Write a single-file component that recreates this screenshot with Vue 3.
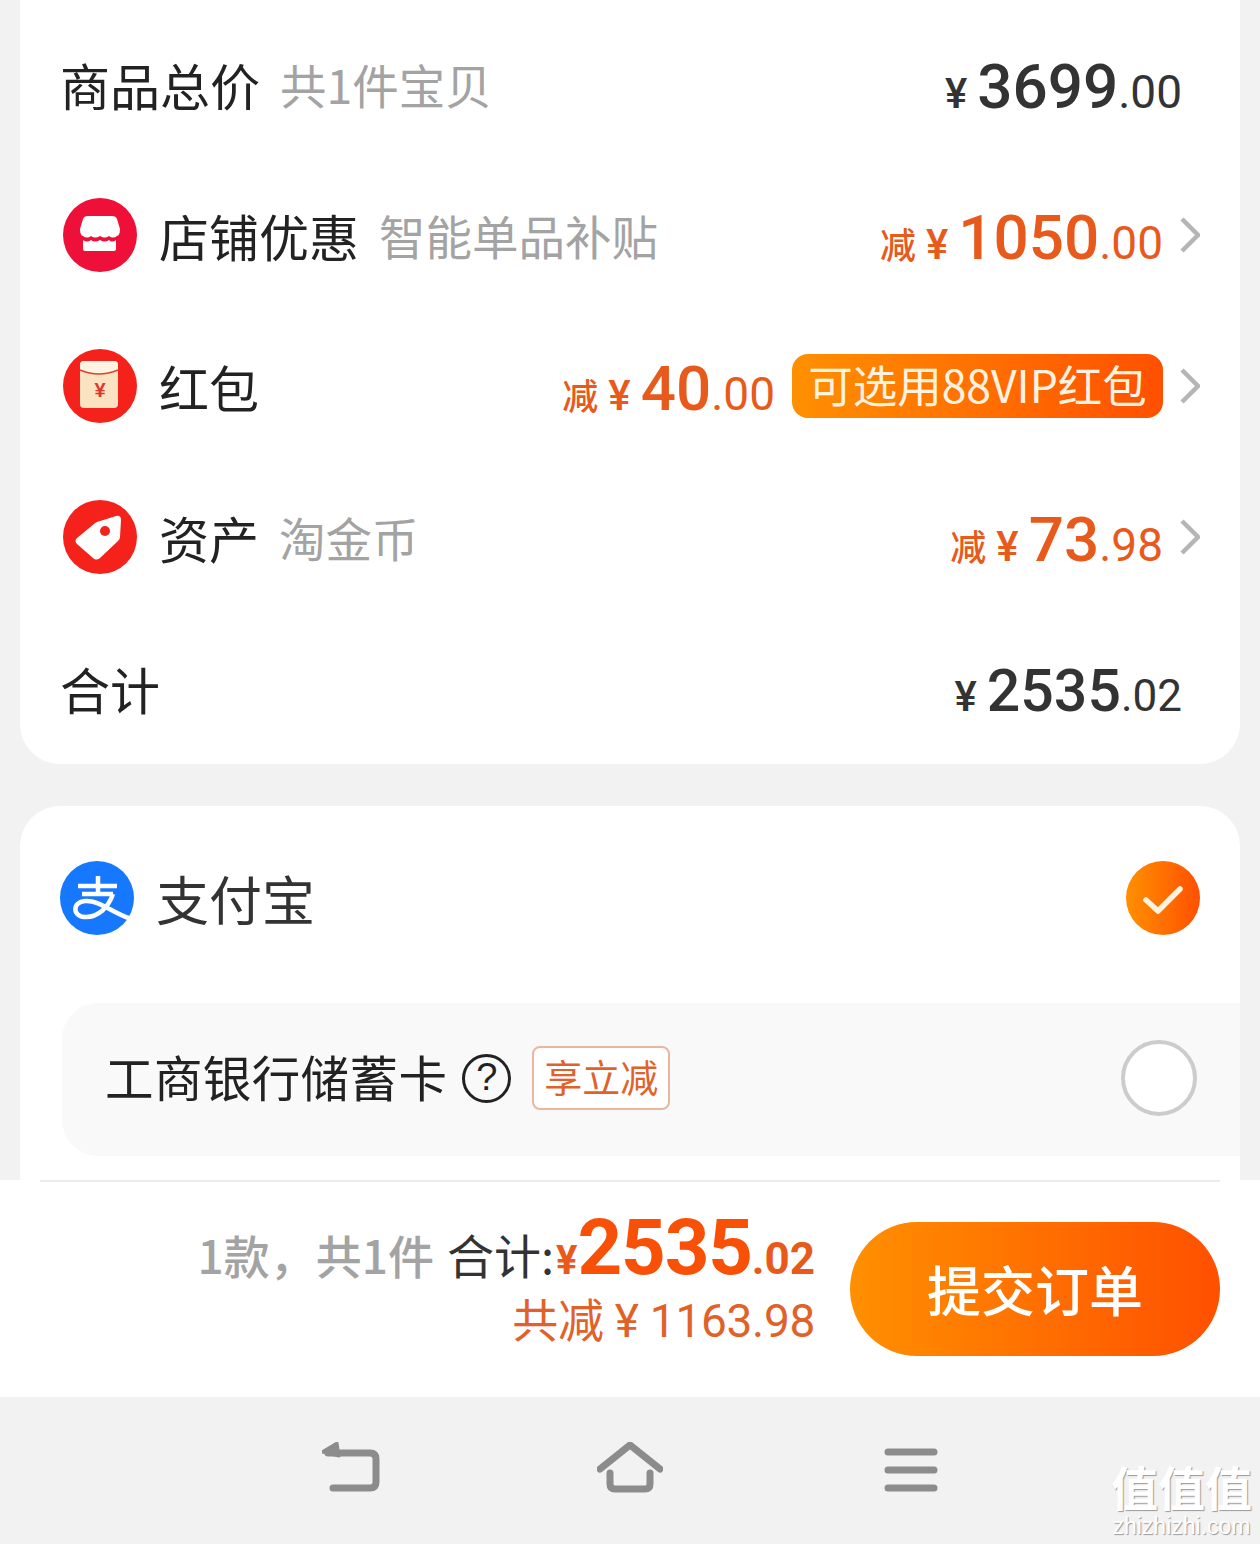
<template>
  <div class="screen">
    <div class="main">
      <section class="card summary">
        <div class="row">
          <span class="label">商品总价</span>
          <span class="sub">共1件宝贝</span>
          <span class="price dark push">
            <span class="yen">¥</span><span class="big">3699</span><span class="cents">.00</span>
          </span>
        </div>

        <div class="row">
          <svg class="row-icon" viewBox="0 0 74 74">
            <circle cx="37" cy="37" r="37" fill="#ee1039" />
            <path d="M25 18H49Q53 18 54 21L57 31Q57 37 54 38Q50 41 46 38Q42 41 37 38Q32 41 28 38Q24 41 20 38Q17 37 17 31L20 21Q21 18 25 18Z" fill="#fff" />
            <path d="M20 42Q24 45 28 42Q32 45 37 42Q42 45 46 42Q49 45 53 42V51Q53 53 51 53H22Q20 53 20 51Z" fill="#fff" />
          </svg>
          <span class="label">店铺优惠</span>
          <span class="sub">智能单品补贴</span>
          <span class="price orange push">
            <span class="minus">减</span><span class="yen">¥</span><span class="big">1050</span><span class="cents">.00</span>
          </span>
          <svg class="chevron" viewBox="0 0 20 36"><path d="M2 2L18 18L2 34" /></svg>
        </div>

        <div class="row">
          <svg class="row-icon" viewBox="0 0 74 74">
            <circle cx="37" cy="37" r="37" fill="#f5221b" />
            <rect x="17" y="12" width="38" height="47" rx="4" fill="#fbe3c2" />
            <path d="M17 16Q17 12 21 12H51Q55 12 55 16V21Q36 29 17 21Z" fill="#fff3e2" />
            <path d="M17 21Q36 29 55 21" fill="none" stroke="#d8432f" stroke-width="1.5" />
            <text x="37" y="48" class="packet-yen">¥</text>
          </svg>
          <span class="label">红包</span>
          <span class="price orange push">
            <span class="minus">减</span><span class="yen">¥</span><span class="big">40</span><span class="cents">.00</span>
          </span>
          <span class="vip">可选用88VIP红包</span>
          <svg class="chevron" viewBox="0 0 20 36"><path d="M2 2L18 18L2 34" /></svg>
        </div>

        <div class="row">
          <svg class="row-icon" viewBox="0 0 74 74">
            <circle cx="37" cy="37" r="37" fill="#f5221b" />
            <path d="M34 22L53 16Q58 15 58 20L57 37Q57 39 55 41L37 58Q33 61 30 58L14 44Q11 41 14 38L31 24Q32 23 34 22Z" fill="#fff" />
            <circle cx="42" cy="31" r="5" fill="#f5221b" />
          </svg>
          <span class="label">资产</span>
          <span class="sub">淘金币</span>
          <span class="price orange push">
            <span class="minus">减</span><span class="yen">¥</span><span class="big">73</span><span class="cents">.98</span>
          </span>
          <svg class="chevron" viewBox="0 0 20 36"><path d="M2 2L18 18L2 34" /></svg>
        </div>

        <div class="row">
          <span class="label">合计</span>
          <span class="price dark push total">
            <span class="yen">¥</span><span class="big">2535</span><span class="cents">.02</span>
          </span>
        </div>
      </section>

      <section class="card pay">
        <div class="pay-head">
          <svg class="alipay" viewBox="0 0 74 74">
            <circle cx="37" cy="37" r="37" fill="#1677ff" />
            <path d="M18 25H57M38 15V32M22 33H53" fill="none" stroke="#fff" stroke-width="4.5" />
            <path d="M53 33C48 47 38 56 26 56C12 56 12 41 25 40C40 39 50 51 71 58" fill="none" stroke="#fff" stroke-width="4.5" />
          </svg>
          <span class="pay-name">支付宝</span>
          <span class="checked">
            <svg viewBox="0 0 74 74"><path d="M20 39L32 50L54 28" /></svg>
          </span>
        </div>
        <div class="bank">
          <span class="bank-name">工商银行储蓄卡</span>
          <span class="help">?</span>
          <span class="promo">享立减</span>
          <span class="radio"></span>
        </div>
      </section>
    </div>

    <footer class="footer">
      <div class="footer-body">
        <div class="totals">
          <div class="total-line">
            <span class="count">1款，共1件</span>
            <span class="sum-label">合计:</span>
            <span class="sum-yen">¥</span><span class="sum-big">2535</span><span class="sum-cents">.02</span>
          </div>
          <div class="saved">共减 ¥ 1163.98</div>
        </div>
        <button class="submit">提交订单</button>
      </div>
    </footer>

    <nav class="nav">
      <svg class="nav-back" viewBox="0 0 60 52">
        <path d="M6 11H48Q54 11 54 17V40Q54 46 48 46H11" />
        <path class="fill" d="M0 10L15 1L17 14Z" />
      </svg>
      <svg class="nav-home" viewBox="0 0 66 52">
        <path d="M3 27L33 3L63 27" />
        <path d="M13 31V42Q13 47 18 47H48Q53 47 53 42V31" />
      </svg>
      <svg class="nav-menu" viewBox="0 0 54 46">
        <path d="M4 4H50M4 22H50M4 40H50" />
      </svg>
      <div class="watermark">
        <div class="wm-cn">值值值</div>
        <div class="wm-en">zhizhizhi.com</div>
      </div>
    </nav>
  </div>
</template>

<script setup>
</script>

<style>
html,
body {
  margin: 0;
  background: #f2f2f2;
}
</style>

<style scoped>
.screen {
  position: relative;
  width: 1260px;
  height: 1544px;
  display: flex;
  flex-direction: column;
  overflow: hidden;
  background: #f2f2f2;
  font-family: "Noto Sans CJK SC", "Noto Sans", sans-serif;
  color: #222;
}

.main {
  height: 1180px;
  overflow: hidden;
}

.card {
  margin: 0 20px;
  background: #fff;
}

.summary {
  box-sizing: border-box;
  height: 764px;
  padding: 10px 40px 0 40px;
  border-radius: 0 0 40px 40px;
  display: flex;
  flex-direction: column;
  gap: 3px;
}

.row {
  height: 148px;
  flex: none;
  display: flex;
  align-items: center;
}

.row-icon {
  width: 74px;
  height: 74px;
  margin-left: 3px;
  margin-right: 22px;
  flex: none;
}

.label {
  font-size: 50px;
  line-height: 60px;
  color: #222;
}

.sub {
  margin-left: 20px;
  font-size: 46.5px;
  line-height: 60px;
  color: #a3a3a3;
}

.push {
  margin-left: auto;
}

.price {
  display: flex;
  align-items: baseline;
  padding-top: 4px;
  font-family: Roboto, "Noto Sans CJK SC", sans-serif;
}

.dark {
  color: #333;
  padding-right: 18px;
}

.orange {
  color: #e85a1c;
}

.yen {
  font-size: 42px;
  font-weight: 500;
  margin-right: 10px;
}

.minus {
  font-family: "Noto Sans CJK SC", sans-serif;
  font-size: 36px;
  font-weight: 500;
  margin-right: 10px;
}

.big {
  font-size: 62px;
  font-weight: 500;
}

.total .big {
  font-size: 59px;
}

.total .cents {
  font-size: 44px;
}

.cents {
  font-size: 46px;
}

.vip {
  margin-left: 17px;
  box-sizing: border-box;
  width: 371px;
  height: 64px;
  border-radius: 16px;
  background: linear-gradient(90deg, #ff9000, #ff5000);
  color: #fff3e0;
  font-size: 44.5px;
  line-height: 60px;
  text-align: center;
  white-space: nowrap;
}

.chevron {
  width: 20px;
  height: 36px;
  margin-left: 17px;
  flex: none;
  fill: none;
  stroke: #b5b5b5;
  stroke-width: 4.5;
}

.pay {
  margin-top: 42px;
  height: 420px;
  border-radius: 40px 40px 0 0;
  padding-left: 40px;
}

.pay-head {
  box-sizing: border-box;
  height: 197px;
  padding-right: 40px;
  padding-bottom: 13px;
  display: flex;
  align-items: center;
}

.alipay {
  width: 74px;
  height: 74px;
  margin-right: 22px;
}

.pay-name {
  font-size: 53px;
  color: #333;
}

.checked {
  margin-left: auto;
  width: 74px;
  height: 74px;
  border-radius: 50%;
  background: linear-gradient(90deg, #ff9000, #ff5000);
}

.checked svg {
  display: block;
  width: 74px;
  height: 74px;
  fill: none;
  stroke: #fff3e0;
  stroke-width: 5.5;
  stroke-linecap: round;
  stroke-linejoin: round;
}

.bank {
  box-sizing: border-box;
  margin-left: 2px;
  height: 153px;
  padding: 0 43px 3px 43px;
  display: flex;
  align-items: center;
  background: #f9f9f9;
  border-radius: 36px 0 0 36px;
}

.bank-name {
  margin-top: -5px;
  font-size: 48.5px;
  color: #222;
  letter-spacing: 0.4px;
}

.help {
  box-sizing: border-box;
  width: 49px;
  height: 49px;
  margin-left: 15px;
  border: 3.5px solid #222;
  border-radius: 50%;
  font-size: 38px;
  line-height: 41px;
  text-align: center;
  font-family: "Liberation Sans", sans-serif;
}

.promo {
  box-sizing: border-box;
  width: 138px;
  height: 64px;
  margin-left: 21px;
  border: 2px solid #e8b79f;
  border-radius: 8px;
  background: #fff;
  color: #e0622a;
  font-size: 38px;
  line-height: 56px;
  text-align: center;
}

.radio {
  box-sizing: border-box;
  width: 76px;
  height: 76px;
  margin-left: auto;
  border: 4px solid #cccccc;
  border-radius: 50%;
  background: #fff;
}

.footer {
  height: 217px;
  background: #fff;
  padding: 0 40px;
  box-sizing: border-box;
}

.footer-body {
  height: 215px;
  border-top: 2px solid #ececec;
  box-sizing: border-box;
  display: flex;
  align-items: center;
  justify-content: flex-end;
  gap: 35px;
}

.totals {
  display: flex;
  flex-direction: column;
  align-items: flex-end;
  margin-top: -25px;
}

.total-line {
  display: flex;
  align-items: baseline;
  height: 89px;
}

.count {
  font-size: 46px;
  font-weight: 500;
  color: #a3a3a3;
  margin-right: 13px;
}

.sum-label {
  font-size: 47px;
  color: #333;
}

.sum-yen {
  color: #e85a1c;
  font-size: 40px;
  font-weight: 700;
  font-family: Roboto, sans-serif;
  margin-left: 2px;
}

.sum-big {
  color: #f95008;
  font-size: 78px;
  font-weight: 700;
  letter-spacing: -1.2px;
  font-family: Roboto, sans-serif;
}

.sum-cents {
  color: #e85a1c;
  font-size: 44px;
  font-weight: 700;
  font-family: Roboto, sans-serif;
}

.saved {
  font-size: 46px;
  line-height: 60px;
  color: #e0622a;
  letter-spacing: -0.3px;
  font-family: Roboto, "Noto Sans CJK SC", sans-serif;
}

.submit {
  width: 370px;
  height: 134px;
  flex: none;
  border: none;
  border-radius: 67px;
  background: linear-gradient(90deg, #ff9000, #ff5000);
  color: #fff;
  font-family: "Noto Sans CJK SC", sans-serif;
  font-size: 54px;
  font-weight: 500;
}

.nav {
  flex: 1;
  display: flex;
  align-items: center;
  position: relative;
  padding-left: 322px;
  box-sizing: border-box;
}

.nav svg {
  fill: none;
  stroke: #8c8c8c;
  stroke-width: 7;
  stroke-linecap: round;
  stroke-linejoin: round;
}

.nav svg .fill {
  fill: #8c8c8c;
  stroke-width: 3;
}

.nav-back {
  width: 60px;
  height: 52px;
  margin-top: -6px;
}

.nav-home {
  width: 66px;
  height: 52px;
  margin-top: -6px;
  margin-left: 215px;
}

.nav-menu {
  width: 54px;
  height: 46px;
  margin-left: 221px;
}

.watermark {
  position: absolute;
  right: 8px;
  top: 64px;
  text-align: center;
  color: #fff;
  text-shadow: 1px 1px 1px #999;
}

.wm-cn {
  font-size: 47px;
  line-height: 50px;
  font-weight: 700;
  margin-bottom: 4px;
}

.wm-en {
  font-family: "Liberation Sans", sans-serif;
  font-size: 23px;
  line-height: 22px;
}

.packet-yen {
  font-family: "Liberation Sans", sans-serif;
  font-size: 20px;
  font-weight: 700;
  fill: #e0352b;
  text-anchor: middle;
}
</style>
